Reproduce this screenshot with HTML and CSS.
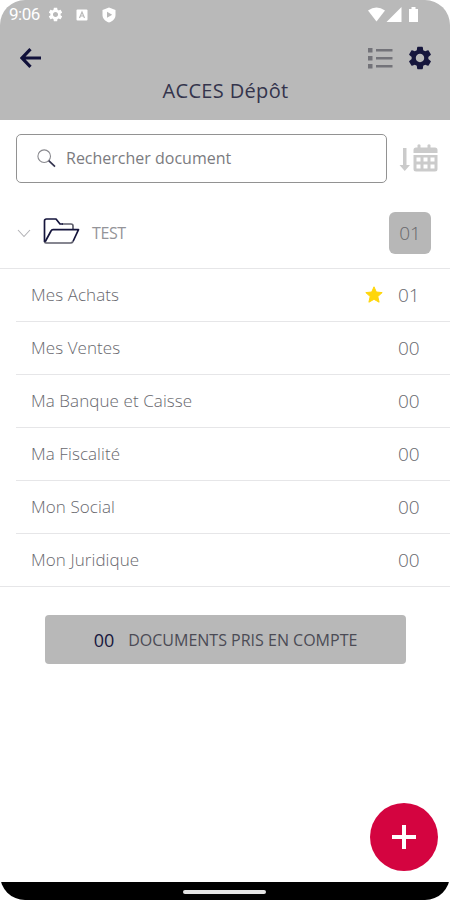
FILE: index.html
```html
<!DOCTYPE html>
<html lang="fr">
<head>
<meta charset="utf-8">
<title>ACCES Dépôt</title>
<link rel="stylesheet" href="styles.css">
</head>
<body>
<div class="screen">
  <header class="header">
    <div class="status">
      <span class="clock">9:06</span>
      <svg class="s-gear" width="17" height="17" viewBox="0 0 24 24"><use href="#gear"/></svg>
      <svg class="s-key" width="12" height="12" viewBox="0 0 12 12"><rect x=".5" y=".5" width="11" height="11" rx="1" fill="#fff"/><path d="M3.500 9 6 3l2.500 6M4.500 7h3" fill="none" stroke="#b9b9b9" stroke-width="1.200"/></svg>
      <svg class="s-shield" width="14" height="16" viewBox="0 0 14 16"><path d="M7 .5 13.500 3v5c0 3.500-2.500 6-6.500 7.500C3 14 .5 11.500 .5 8V3z" fill="#fff"/><path d="M5 4.800 10.200 7.800 5 10.800z" fill="#b9b9b9"/></svg>
      <svg class="s-right" width="52" height="16" viewBox="0 0 52 16"><path d="M0 3.500Q8.500-2.500 17 3.500L8.500 14.500z"/><path d="M33.500 0v15H18.500z"/><path d="M41 2h2.500V0h4v2H50v13h-9z"/></svg>
    </div>
    <div class="toolbar">
      <svg class="back" width="22" height="20" viewBox="0 0 22 20"><path d="M10.500 1.200 2 10l8.500 8.800M2 10h19" fill="none" stroke="#11113a" stroke-width="3.200"/></svg>
      <svg class="list" width="25" height="21" viewBox="0 0 25 21"><path d="M0 0h4.500v4.500H0zM0 8h4.500v4.500H0zM0 16h4.500v4.500H0zM8 1h16.500v2.600H8zM8 9h16.500v2.600H8zM8 17h16.500v2.600H8z" fill="#737379"/></svg>
      <svg class="gear" width="28" height="28" viewBox="0 0 24 24"><path id="gear" d="M19.140 12.940c.04-.3.060-.61.060-.94s-.02-.64-.07-.94l2.030-1.580c.18-.14.23-.41.120-.61l-1.920-3.320c-.12-.22-.37-.29-.59-.22l-2.390.96c-.5-.38-1.030-.7-1.620-.94l-.36-2.540c-.04-.24-.24-.41-.48-.41h-3.840c-.24 0-.43.170-.47.410l-.36 2.540c-.59.240-1.130.570-1.620.940l-2.390-.96c-.22-.08-.47 0-.59.220L2.740 8.870c-.12.210-.08.470.120.610l2.030 1.580c-.05.300-.09.630-.09.940s.02.640.070.940l-2.030 1.580c-.18.140-.23.410-.12.610l1.920 3.320c.12.220.37.290.59.220l2.390-.96c.5.380 1.030.700 1.620.940l.36 2.540c.05.240.24.410.48.410h3.840c.24 0 .44-.17.470-.41l.36-2.540c.59-.24 1.130-.56 1.620-.94l2.390.96c.22.080.47 0 .59-.22l1.920-3.320c.12-.22.070-.47-.12-.61zM12 15.600c-1.980 0-3.600-1.620-3.600-3.600s1.620-3.600 3.600-3.600 3.600 1.620 3.600 3.600-1.620 3.600-3.600 3.600z"/></svg>
    </div>
    <h1>ACCES Dépôt</h1>
  </header>
  <main>
    <div class="search-row">
      <div class="search">
        <svg width="19" height="19" viewBox="0 0 19 19" fill="none"><circle cx="7.200" cy="7.200" r="6.300" stroke="#8a8a8f" stroke-width="1.100"/><path d="m11.700 11.700 6.300 6" stroke="#34344f" stroke-width="1.700"/></svg>
        <span>Rechercher document</span>
      </div>
      <svg class="sort" width="39" height="29" viewBox="0 0 39 29"><path d="M4 4h3.500v17H11l-5.250 6L.5 21H4z"/><path fill-rule="evenodd" d="M18.500 1q1.500-1.500 3 0v2.500h7V1q1.500-1.500 3 0v2.500H36q2.500 0 2.500 2.500v3h-24V6q0-2.500 2.500-2.500h1.500zM14.500 11h24v14q0 2.500-2.500 2.500H17q-2.500 0-2.500-2.500zM17.500 13.500v4h4v-4zm7 0v4h4v-4zm7 0v4h4v-4zm-14 7v4h4v-4zm7 0v4h4v-4zm7 0v4h4v-4z"/></svg>
    </div>
    <div class="folder">
      <svg class="chevron" width="14" height="9" viewBox="0 0 14 9"><path d="m1 1 6 6.500L13 1" fill="none" stroke="#b2b2b6" stroke-width="1.100"/></svg>
      <svg class="folder-icon" width="37" height="27" viewBox="0 0 37 27" fill="none" stroke-width="1.700" stroke-linejoin="round"><path d="M19 6h9q2 0 2 2v4" stroke="#5f5f6c"/><path d="M1.500 24V3q0-2 2-2H13l4 5h3" stroke="#15153c"/><path d="M2 24 8 13q.6-1.300 2-1.300h25.500L30 23.500" stroke="#15153c"/><path d="M1.500 24q.5 1 2 1h24q1.500 0 2.500-1.500" stroke="#5f5f6c"/></svg>
      <span class="name">TEST</span>
      <span class="badge">01</span>
    </div>
    <ul class="rows">
      <li><span>Mes Achats</span><svg class="star" width="18" height="17" viewBox="0 0 18 17"><path d="m9 .8 2.300 5.200 5.900.6-4.400 3.900 1.300 5.700L9 13.300l-5.100 2.900 1.300-5.700L.8 6.600 6.700 6z" fill="#ffd60a" stroke="#ffd60a" stroke-linejoin="round"/></svg><b>01</b></li>
      <li><span>Mes Ventes</span><b>00</b></li>
      <li><span>Ma Banque et Caisse</span><b>00</b></li>
      <li><span>Ma Fiscalité</span><b>00</b></li>
      <li><span>Mon Social</span><b>00</b></li>
      <li><span>Mon Juridique</span><b>00</b></li>
    </ul>
    <div class="button"><span class="total">00</span><span class="label">DOCUMENTS PRIS EN COMPTE</span></div>
  </main>
  <div class="fab"><svg width="26" height="26" viewBox="0 0 26 26"><path d="M13 1v24M1 13h24" stroke="#fff" stroke-width="4"/></svg></div>
  <footer class="nav"><div class="handle"></div></footer>
</div>
</body>
</html>
```
FILE: styles.css
```css
* { box-sizing: border-box; }
body { margin: 0; background: #fff; font-family: "Open Sans", sans-serif; font-weight: 300; color: #68686e; }
svg { display: block; flex: none; }
.screen { position: relative; width: 450px; height: 900px; display: flex; flex-direction: column; border-radius: 25px; overflow: hidden; background: #fff; }
.header { height: 120px; background: #b9b9b9; flex: none; }
.status { height: 29px; display: flex; align-items: center; padding: 0 30px 0 9px; fill: #fff; }
.clock { font: 400 17px/29px Roboto, sans-serif; color: #fff; width: 38px; letter-spacing: -0.5px; }
.s-key { margin-left: 12px; }
.s-shield { margin-left: 14px; }
.s-right { margin-left: auto; }
.toolbar { height: 51px; display: flex; align-items: center; padding: 7px 16px 0 20px; }
.list { margin-left: auto; margin-right: 13px; }
.gear { fill: #17173d; }
h1 { margin: -3px 0 0 1px; font-size: 20px; line-height: 27px; font-weight: 400; text-align: center; color: #34344c; letter-spacing: 0.35px; }
main { flex: 1; }
.search-row { display: flex; align-items: center; padding: 14px 12px 0 16px; height: 63px; }
.search { width: 371px; height: 49px; border: 1px solid #929292; border-radius: 5px; display: flex; align-items: center; padding: 0 21px 1px 20px; font-size: 16px; color: #7b7b80; font-weight: 400; }
.search span { margin-left: 10px; }
.sort { margin-left: auto; fill: #cbcbcb; }
.folder { height: 86px; display: flex; align-items: center; padding: 15px 19px 0 17px; border-bottom: 1px solid #e6e6e8; }
.folder-icon { margin: -4px 0 0 12px; }
.name { margin-left: 12px; font-size: 16px; font-weight: 400; color: #949499; letter-spacing: -0.4px; }
.badge { margin-left: auto; width: 42px; height: 42px; border-radius: 6px; background: #b7b7b7; color: #68686c; font-size: 19px; line-height: 42px; text-align: center; }
.rows { list-style: none; margin: 0; padding: 0 0 0 16px; border-bottom: 1px solid #e6e6e8; }
.rows li { height: 53px; display: flex; align-items: center; padding: 0 30px 1px 15px; font-size: 17px; letter-spacing: 0.08px; border-top: 1px solid #e6e6e8; }
.rows li:first-child { border-top: 0; height: 52px; }
.rows span { margin-right: auto; }
.rows b { font-weight: 300; font-size: 19px; width: 22px; letter-spacing: 0; }
.star { margin-right: 15px; }
.button { width: 361px; height: 49px; margin: 28px 0 0 45px; border-radius: 4px; background: #b8b8b8; display: flex; align-items: center; justify-content: center; color: #4b4b55; font-size: 16px; font-weight: 400; }
.total { margin-right: 14px; font-size: 18px; color: #17173d; }
.fab { position: absolute; left: 370px; top: 803px; width: 68px; height: 68px; border-radius: 50%; background: #d40440; display: flex; align-items: center; justify-content: center; }
.nav { height: 18px; flex: none; background: #000; display: flex; justify-content: center; padding-top: 8px; }
.handle { width: 83px; height: 4px; border-radius: 2px; background: #e4e4e4; margin-right: 1px; }
```
